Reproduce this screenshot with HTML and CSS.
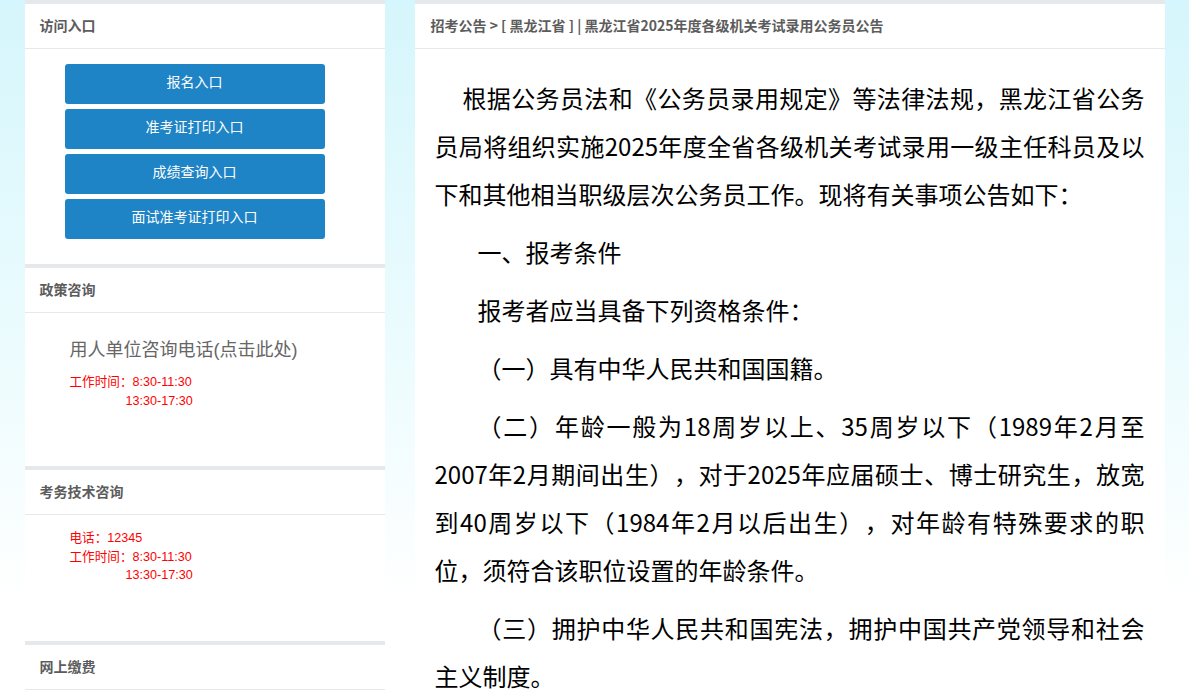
FILE: index.html
```html
<!DOCTYPE html>
<html lang="zh-CN">
<head>
    <meta charset="UTF-8">
    <meta name="viewport" content="width=device-width, initial-scale=1.0">
    <title>黑龙江省2025年度各级机关考试录用公务员公告</title>
    <link rel="stylesheet" href="styles.css">
</head>
<body>
    <div class="page">
        <div class="side">
            <div class="panel">
                <div class="panel-title">访问入口</div>
                <div class="panel-body entry-body">
                    <a href="#" class="entry-btn">报名入口</a>
                    <a href="#" class="entry-btn">准考证打印入口</a>
                    <a href="#" class="entry-btn">成绩查询入口</a>
                    <a href="#" class="entry-btn">面试准考证打印入口</a>
                </div>
            </div>

            <div class="panel">
                <div class="panel-title">政策咨询</div>
                <div class="panel-body policy-body">
                    <a href="#" class="phone-link">用人单位咨询电话(点击此处)</a>
                    <div class="red-info">
                        <div>工作时间：8:30-11:30</div>
                        <div class="pm">13:30-17:30</div>
                    </div>
                </div>
            </div>

            <div class="panel">
                <div class="panel-title">考务技术咨询</div>
                <div class="panel-body tech-body">
                    <div class="red-info">
                        <div>电话：12345</div>
                        <div>工作时间：8:30-11:30</div>
                        <div class="pm">13:30-17:30</div>
                    </div>
                </div>
            </div>

            <div class="panel">
                <div class="panel-title">网上缴费</div>
                <div class="panel-body"></div>
            </div>
        </div>

        <div class="main">
            <div class="panel">
                <div class="panel-title crumbs">招考公告 &gt; [ 黑龙江省 ] | 黑龙江省2025年度各级机关考试录用公务员公告</div>
                <div class="article">
                    <p class="lead">根据公务员法和《公务员录用规定》等法律法规，黑龙江省公务员局将组织实施2025年度全省各级机关考试录用一级主任科员及以下和其他相当职级层次公务员工作。现将有关事项公告如下：</p>
                    <p>一、报考条件</p>
                    <p>报考者应当具备下列资格条件：</p>
                    <p>（一）具有中华人民共和国国籍。</p>
                    <p>（二）年龄一般为18周岁以上、35周岁以下（1989年2月至2007年2月期间出生），对于2025年应届硕士、博士研究生，放宽到40周岁以下（1984年2月以后出生），对年龄有特殊要求的职位，须符合该职位设置的年龄条件。</p>
                    <p>（三）拥护中华人民共和国宪法，拥护中国共产党领导和社会主义制度。</p>
                </div>
            </div>
        </div>
    </div>
</body>
</html>
```

FILE: styles.css
```css
:root {
    --line-color: #e6e9ec;
    --title-color: #5c5c5c;
    --btn-color: #1e84c6;
    --red: #ff0000;
}

* {
    box-sizing: border-box;
    margin: 0;
    padding: 0;
}

html {
    overflow: hidden;
}

body {
    font-family: "Noto Sans CJK SC", "Liberation Sans", sans-serif;
    background: #fff linear-gradient(#d5f6fc, #eefcfe 380px, #ffffff 600px) no-repeat;
    background-size: 100% 693px;
    min-height: 100vh;
    color: #000;
}

.page {
    width: 1140px;
    margin: 0 auto;
    display: flex;
    gap: 30px;
    align-items: flex-start;
}

.side {
    width: 360px;
}

.main {
    flex: 1;
}

.panel {
    background-color: #fff;
    border-top: 4px solid var(--line-color);
}

.panel-title {
    height: 45px;
    line-height: 42px;
    padding-left: 15px;
    border-bottom: 1px solid var(--line-color);
    font-size: 14px;
    font-weight: bold;
    color: var(--title-color);
}

.crumbs {
    padding-left: 16px;
}

/* 访问入口 */
.entry-body {
    height: 215px;
    padding: 15px 0 0 40px;
    display: flex;
    flex-direction: column;
    gap: 5px;
}

.entry-btn {
    display: block;
    width: 260px;
    height: 40px;
    line-height: 35px;
    background-color: var(--btn-color);
    border-radius: 3px;
    color: #fff;
    text-align: center;
    font-size: 14px;
    text-decoration: none;
}

/* 咨询 */
.policy-body {
    height: 153px;
    padding: 25px 0 0 45px;
}

.phone-link {
    display: block;
    font-family: "Liberation Sans", "Noto Sans CJK SC", sans-serif;
    font-size: 18px;
    line-height: 24px;
    color: #666;
    text-decoration: none;
    margin-bottom: 11px;
}

.tech-body {
    height: 126px;
    padding: 14px 0 0 45px;
}

.red-info {
    font-family: "Liberation Sans", "Noto Sans CJK SC", sans-serif;
    font-size: 12.6px;
    line-height: 18.5px;
    color: var(--red);
}

.red-info .pm {
    padding-left: 56px;
}

/* 正文 */
.article {
    padding: 25px 20px 30px 20px;
    font-size: 24px;
    line-height: 48px;
    text-align: justify;
    text-spacing-trim: space-all;
}

.article p {
    margin-bottom: 10px;
    text-indent: 43px;
}

.article .lead {
    text-indent: 28px;
}
```
